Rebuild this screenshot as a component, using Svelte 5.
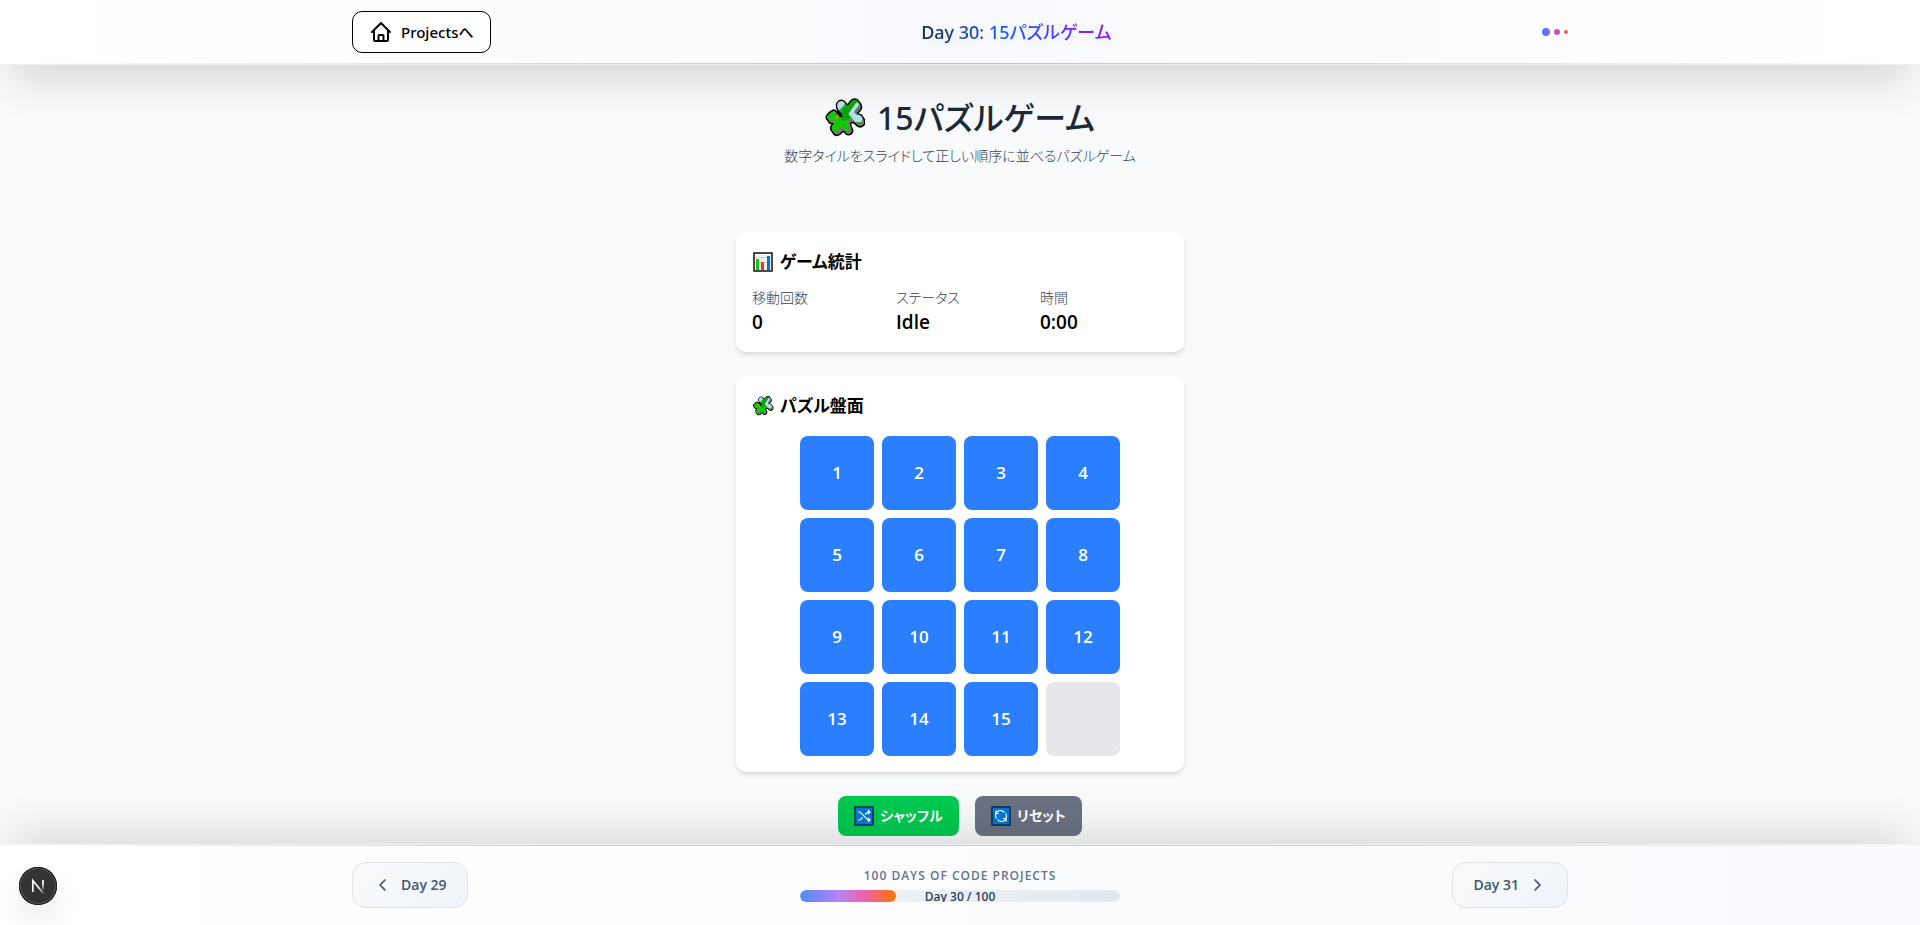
<script>
  const tiles = [...Array.from({ length: 15 }, (_, i) => i + 1), null];
  const stats = [
    ['移動回数', '0'],
    ['ステータス', 'Idle'],
    ['時間', '0:00']
  ];
  const day = 30;
  const piece =
    'M1 18.500Q4 14 8 12.500Q10 13 11.500 16Q13.500 18 15 16Q15.500 14.500 13.500 12.500Q10.500 8.500 12 5Q14 1.500 17.500 3Q20 4.500 21.500 7.500Q23.500 7 25 4Q28 0 32 2Q35.500 5.500 32 9.500Q28 12.500 29.500 15.500Q31.500 17 34.500 17Q38.500 19 36.500 23.500Q33.500 27 30 24Q27 20 24 21Q21.500 22.500 23 26Q26 30 23.500 32.500Q20.500 35 18 31.500Q16 28.500 13.500 31.500Q10.500 35.500 7 33.500Q4 30.500 7 27Q9.500 24.500 6.500 22.500Q.5 22.500 1 18.500Z';
</script>

{#snippet puzzle(id)}
  <svg class="emoji" viewBox="-1 0 41 40" aria-hidden="true">
    <clipPath {id}><path d={piece} /></clipPath>
    <g stroke="#000" stroke-width="3" stroke-linejoin="round">
      <path d={piece} />
      <path d={piece} transform="translate(2 3)" />
    </g>
    <path d={piece} transform="translate(2 3)" fill="#767676" />
    <path d={piece} transform="translate(1 1)" fill="#767676" />
    <g clip-path="url(#{id})">
      <path fill="#16c60c" d="M-1 0h41v40H-1z" />
      <path fill="#13a10e" d="M14 17l6-11 12-6v11l-8 10-7 2z" />
      <path fill="#b9dcf7" d="M10 0h11l-3 8-6 5zM31 4l9 4v16H30l-7-8z" />
    </g>
    <path d="M10.500 14q4 0 5 5" stroke="#000" stroke-width="3" fill="none" />
    <circle cx="11" cy="19.500" r="1.700" fill="#c6843e" />
  </svg>
{/snippet}

<div class="page">
  <header>
    <div class="bar">
      <a class="home" href="#projects">
        <svg width="20" height="20" viewBox="0 0 20 20" fill="none" stroke="currentColor" stroke-width="2" stroke-linejoin="round" stroke-linecap="round" aria-hidden="true">
          <path d="M1 10l9-9 9 9M3 8v9.500q0 1.500 1.500 1.500h11q1.500 0 1.500-1.500V8M7.500 19v-5q0-1 1-1h3q1 0 1 1v5" />
        </svg>
        Projectsへ
      </a>
      <div class="title"><span>Day 30: 15パズルゲーム</span></div>
      <div class="dots"><i></i><i></i><i></i></div>
    </div>
  </header>

  <main>
    <h1>{@render puzzle('piece-title')}15パズルゲーム</h1>
    <p class="lead">数字タイルをスライドして正しい順序に並べるパズルゲーム</p>

    <div class="game">
      <section class="card">
        <h2>
          <svg class="emoji" viewBox="0 0 20 20" aria-hidden="true">
            <path fill="#f2f2f2" stroke="#111" stroke-width="1.500" d="M1 1h18v18H1z" />
            <path fill="#ccc" d="M2 5h16v1H2zM2 10h16v1H2z" />
            <path fill="#16c60c" d="M3 7h3v11H3z" />
            <path fill="#f03a17" d="M8 10h3v8H8z" />
            <path fill="#0078d7" d="M14 4h3v14h-3z" />
          </svg>
          ゲーム統計
        </h2>
        <dl>
          {#each stats as [label, value]}
            <div><dt>{label}</dt><dd>{value}</dd></div>
          {/each}
        </dl>
      </section>

      <section class="card board">
        <h2>{@render puzzle('piece-board')}パズル盤面</h2>
        <div class="grid">
          {#each tiles as tile}
            <button class:empty={tile === null} disabled={tile === null} aria-label={tile === null ? '空き' : String(tile)}>{tile ?? ''}</button>
          {/each}
        </div>
      </section>

      <div class="actions">
        <button class="shuffle">
          <svg class="emoji" viewBox="0 0 20 20" fill="none" aria-hidden="true">
            <path fill="#0078d7" stroke="#062b4b" stroke-width="1.500" d="M1 1h18v18H1z" />
            <path stroke="#fff" stroke-width="1.200" d="M4 6h2l8 8h2M4 14h2l2.500-2.500M11 8.500L14 6h2M14 4l2 2-2 2M14 12l2 2-2 2" />
          </svg>
          シャッフル
        </button>
        <button class="reset">
          <svg class="emoji" viewBox="0 0 20 20" fill="none" aria-hidden="true">
            <path fill="#0078d7" stroke="#062b4b" stroke-width="1.500" d="M1 1h18v18H1z" />
            <path stroke="#fff" stroke-width="1.200" d="M5.500 12.500A5 5 0 0 1 13.500 6.500M14.500 7.500A5 5 0 0 1 6.500 13.500M5 4.500V7.500h3M15 15.500V12.500h-3" />
          </svg>
          リセット
        </button>
      </div>
    </div>
  </main>

  <footer>
    <div class="bar">
      <a class="nav" href="#day29">
        <svg width="20" height="20" viewBox="0 0 20 20" fill="none" stroke="currentColor" stroke-width="1.700" stroke-linecap="round" stroke-linejoin="round" aria-hidden="true"><path d="M12 5l-5 5 5 5" /></svg>
        Day 29
      </a>
      <div class="progress">
        <p>100 DAYS OF CODE PROJECTS</p>
        <div class="track">
          <div class="fill" style="width: {day}%"></div>
          <span>Day {day} / 100</span>
        </div>
      </div>
      <a class="nav" href="#day31">
        Day 31
        <svg width="20" height="20" viewBox="0 0 20 20" fill="none" stroke="currentColor" stroke-width="1.700" stroke-linecap="round" stroke-linejoin="round" aria-hidden="true"><path d="M8 5l5 5-5 5" /></svg>
      </a>
    </div>
    <button class="dev" aria-label="Next.js">
      <svg width="38" height="38" viewBox="0 0 38 38" fill="none" aria-hidden="true">
        <defs>
          <linearGradient id="stem" x1="0" y1="12" x2="0" y2="24" gradientUnits="userSpaceOnUse"><stop offset="0.400" stop-color="#fff" /><stop offset="1" stop-color="#fff" stop-opacity="0" /></linearGradient>
          <linearGradient id="diag" x1="20" y1="20" x2="25" y2="27" gradientUnits="userSpaceOnUse"><stop stop-color="#fff" /><stop offset="1" stop-color="#fff" stop-opacity="0.200" /></linearGradient>
        </defs>
        <path d="M13.800 25V13.500L24.500 26.500" stroke="url(#diag)" stroke-width="1.700" />
        <path d="M24 13v10" stroke="url(#stem)" stroke-width="1.700" />
      </svg>
    </button>
  </footer>
</div>

<style>
  :global(body) { margin: 0; }
  .page {
    min-height: 100vh;
    display: flex;
    flex-direction: column;
    background: #f9fafb;
    color: #000;
    font-family: "Open Sans", "Noto Sans CJK JP", sans-serif;
    font-feature-settings: "palt";
    font-size: 16px;
    line-height: 24px;
  }
  .page * { box-sizing: border-box; }
  h1, h2, p, dl, dd { margin: 0; }
  a { color: inherit; text-decoration: none; }
  button { font: inherit; font-feature-settings: inherit; border: 0; padding: 0; cursor: pointer; }
  svg { flex: none; display: block; }

  header, footer { position: relative; z-index: 1; }
  header {
    background: linear-gradient(90deg, #fff, #f9fafd 50%, #fff);
    border-bottom: 1px solid #eff2f7;
    box-shadow: 0 22px 44px -10px rgb(0 0 0 / 17%);
  }
  header::after, footer::before {
    content: "";
    position: absolute;
    left: 0;
    right: 0;
    height: 1px;
  }
  header::after { bottom: 0; background: linear-gradient(90deg, transparent, #a5c6fa, transparent); }
  footer::before { top: 0; background: linear-gradient(90deg, transparent, #b3cffa 30%, #d8bcf2 50%, #f9bcdc 70%, transparent); }
  .bar {
    max-width: 1280px;
    margin: 0 auto;
    padding: 0 32px;
    display: flex;
    align-items: center;
    justify-content: space-between;
  }
  header .bar { height: 64px; }
  .home {
    display: flex;
    align-items: center;
    gap: 10px;
    height: 42px;
    padding: 0 16px 0 18px;
    border: 1px solid #000;
    border-radius: 10px;
    background: #fff;
    font-family: "Noto Sans", "Noto Sans CJK JP", sans-serif;
    font-size: 15px;
    font-weight: 500;
  }
  .title {
    font-family: "Noto Sans", "Noto Sans CJK JP", sans-serif;
    font-size: 18px;
    font-weight: 500;
    line-height: 28px;
    filter: drop-shadow(0 2px 6px rgb(59 130 246 / 15%));
  }
  .title span {
    background: linear-gradient(90deg, #1e293b, #155dfc 45%, #9810fa);
    background-clip: text;
    color: transparent;
  }
  .dots { display: flex; align-items: center; gap: 4px; }
  .dots i { width: 8px; height: 8px; border-radius: 50%; background: linear-gradient(90deg, #3b82f6, #a855f7); }
  .dots i:nth-child(2) { width: 6px; height: 6px; background: linear-gradient(90deg, #a855f7, #ec4899); }
  .dots i:nth-child(3) { width: 4px; height: 4px; background: linear-gradient(90deg, #ec4899, #f97316); }

  main { flex: 1; padding: 33px 16px 8px; }
  h1 {
    display: flex;
    align-items: center;
    justify-content: center;
    gap: 12px;
    color: #1e2939;
    font-family: "Noto Sans", "Noto Sans CJK JP", sans-serif;
    font-size: 32px;
    font-weight: 500;
    line-height: 40px;
  }
  h1 .emoji { width: 40px; height: 40px; }
  .lead { margin-top: 6px; text-align: center; color: #364153; font-weight: 300; font-size: 14px; }
  .game { max-width: 448px; margin: 64px auto 0; display: grid; gap: 24px; }
  .card {
    padding: 16px;
    border-radius: 10px;
    background: #fff;
    box-shadow: 0 4px 6px -1px rgb(0 0 0 / 10%), 0 2px 4px -2px rgb(0 0 0 / 10%);
  }
  h2 {
    display: flex;
    align-items: center;
    gap: 6px;
    margin-bottom: 12px;
    font-size: 17px;
    font-weight: 600;
    line-height: 28px;
  }
  h2 .emoji { width: 22px; height: 20px; }
  dl { display: grid; grid-template-columns: repeat(3, 1fr); gap: 16px; }
  dt { color: #364153; font-size: 14px; font-weight: 300; line-height: 20px; }
  dd { font-size: 19px; font-weight: 600; line-height: 28px; }
  .board h2 { margin-bottom: 16px; }
  .grid { display: grid; grid-template-columns: repeat(4, 1fr); gap: 8px; max-width: 320px; margin: 0 auto; }
  .grid button {
    aspect-ratio: 1;
    border-radius: 8px;
    background: #2b7fff;
    color: #fff;
    font-size: 17px;
    font-weight: 600;
  }
  .grid .empty { background: #e5e7eb; cursor: default; }
  .actions { display: flex; justify-content: center; gap: 16px; }
  .actions button {
    display: flex;
    align-items: center;
    gap: 6px;
    height: 40px;
    padding: 0 16px;
    border-radius: 8px;
    color: #fff;
    font-size: 14px;
    font-weight: 600;
  }
  .actions .emoji { width: 20px; height: 20px; }
  .shuffle { background: #00c950; }
  .reset { background: #6a7282; }

  footer {
    background: linear-gradient(90deg, #fff, #f9fafd);
    border-top: 1px solid #eff2f7;
    box-shadow: 0 -22px 44px -10px rgb(0 0 0 / 13%);
  }
  footer .bar { height: 80px; }
  .nav {
    display: flex;
    align-items: center;
    gap: 8px;
    height: 46px;
    padding: 0 20px;
    border: 1px solid #dfe2e8;
    border-radius: 14px;
    background: linear-gradient(135deg, #f9fafb, #eff4fa);
    color: #45556c;
    font-size: 14px;
    font-weight: 600;
  }
  .progress { width: 320px; text-align: center; }
  .progress p { margin-bottom: 6px; color: #62748e; font-size: 12px; font-weight: 600; line-height: 16px; letter-spacing: 1px; }
  .track {
    position: relative;
    height: 12px;
    border-radius: 6px;
    overflow: hidden;
    background: linear-gradient(90deg, #f1f5f9, #e2e8f0);
  }
  .fill { height: 100%; border-radius: 6px; background: linear-gradient(90deg, #4f8cf8, #b584f8 40%, #f062a8 68%, #f97316 95%); }
  .track span { position: absolute; inset: 0; color: #314158; font-size: 12px; font-weight: 600; line-height: 14px; }
  .dev {
    position: absolute;
    left: 19px;
    top: 22px;
    width: 38px;
    height: 38px;
    border-radius: 50%;
    background: #333;
    box-shadow: inset 0 0 0 1px #171717, inset 0 0 0 2px #555, 0 16px 32px -8px rgb(0 0 0 / 24%);
  }
</style>
